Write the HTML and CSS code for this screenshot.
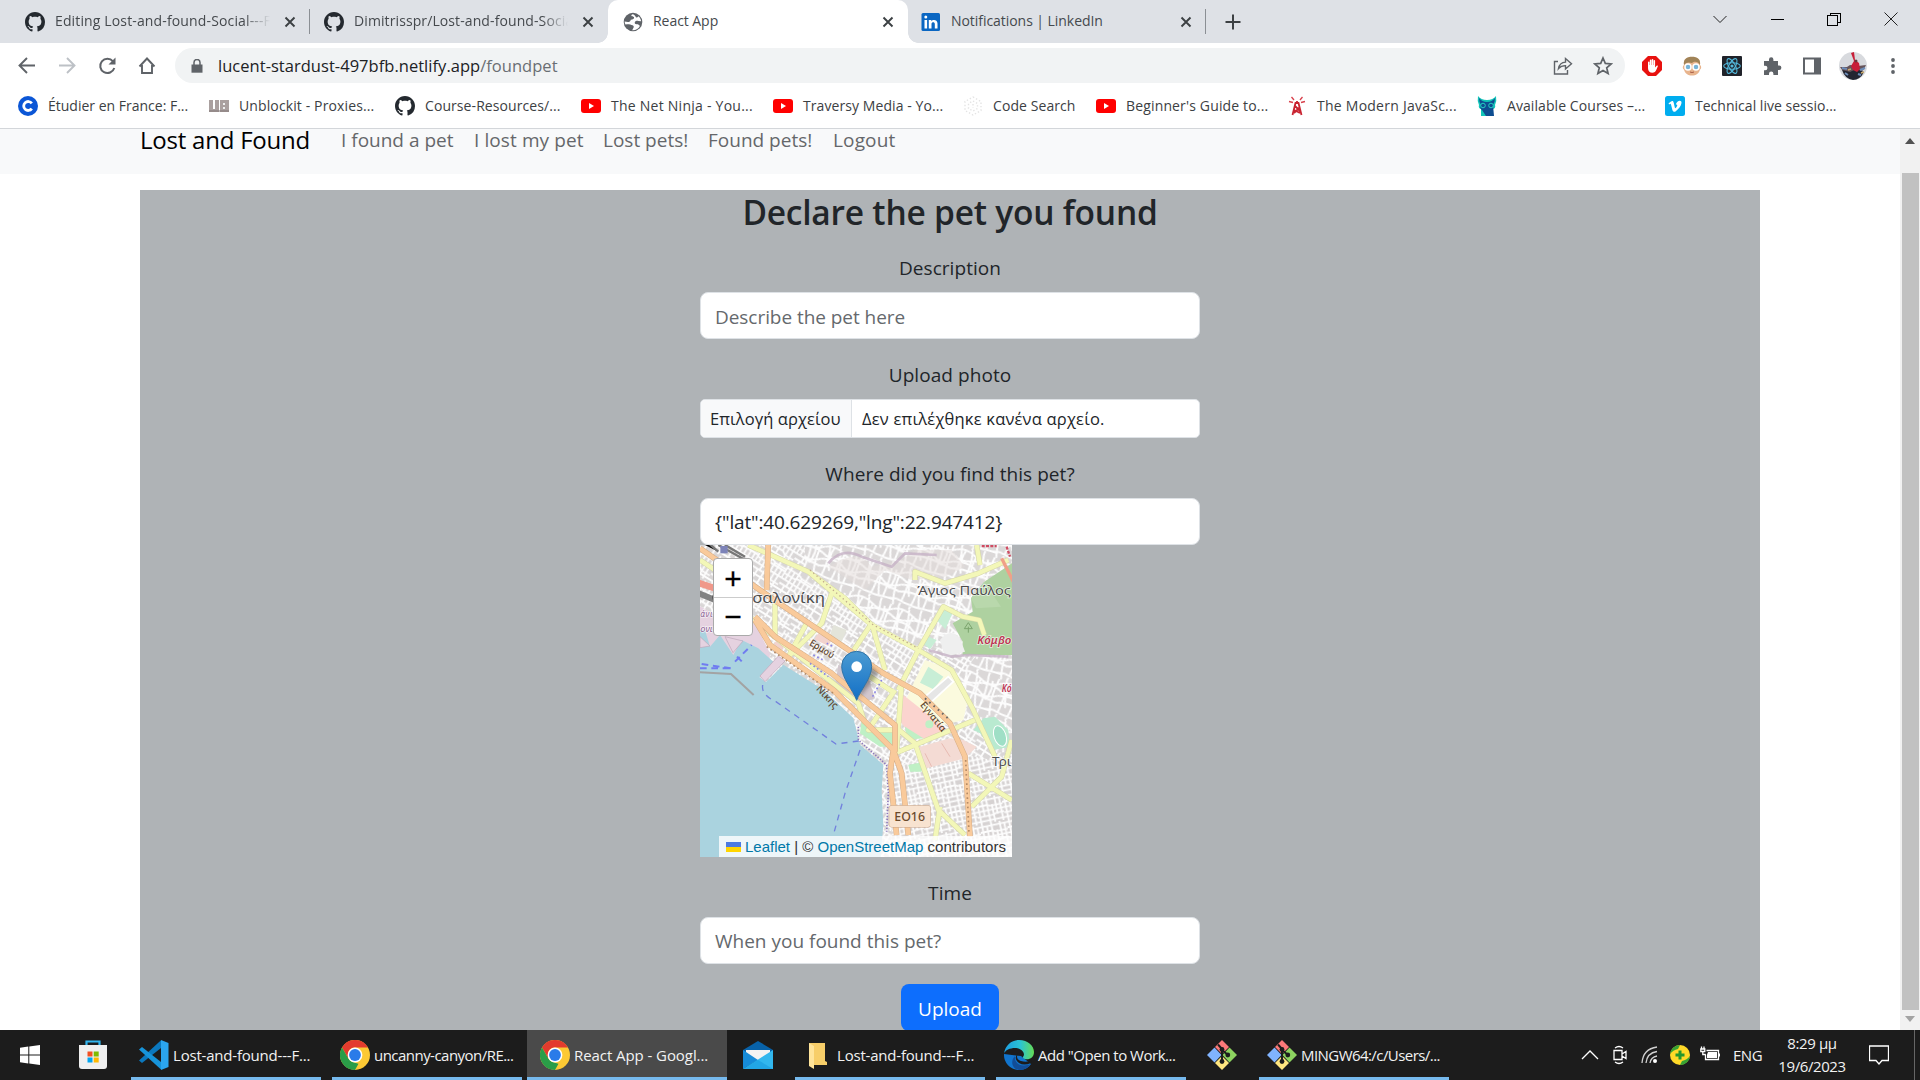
FILE: index.html
```html
<!DOCTYPE html>
<html lang="el">
<head>
<meta charset="utf-8">
<title>React App</title>
<link rel="stylesheet" href="styles.css">
</head>
<body>
<svg class="defs" width="0" height="0" aria-hidden="true">
  <symbol id="github" viewBox="0 0 16 16"><path fill="#24292f" d="M8 0C3.58 0 0 3.58 0 8c0 3.54 2.29 6.53 5.47 7.59.4.07.55-.17.55-.38 0-.19-.01-.82-.01-1.49-2.01.37-2.53-.49-2.69-.94-.09-.23-.48-.94-.82-1.13-.28-.15-.68-.52-.01-.53.63-.01 1.08.58 1.23.82.72 1.21 1.87.87 2.33.66.07-.52.28-.87.51-1.07-1.78-.2-3.64-.89-3.64-3.95 0-.87.31-1.59.82-2.15-.08-.2-.36-1.02.08-2.12 0 0 .67-.21 2.2.82.64-.18 1.32-.27 2-.27s1.36.09 2 .27c1.53-1.04 2.2-.82 2.2-.82.44 1.1.16 1.92.08 2.12.51.56.82 1.27.82 2.15 0 3.07-1.87 3.75-3.65 3.95.29.25.54.73.54 1.48 0 1.07-.01 1.93-.01 2.2 0 .21.15.46.55.38A8.01 8.01 0 0 0 16 8c0-4.42-3.58-8-8-8z"/></symbol>
  <symbol id="close" viewBox="0 0 12 12"><path d="M1.5 1.5l9 9M10.5 1.5l-9 9" stroke="#3c4043" stroke-width="1.9" fill="none"/></symbol>
  <symbol id="youtube" viewBox="0 0 20 20"><rect y="3" width="20" height="14" rx="3" fill="#f00"/><path d="M8 7v6l5-3z" fill="#fff"/></symbol>
  <symbol id="chrome" viewBox="0 0 30 30"><circle cx="15" cy="15" r="15" fill="#fcc934"/><path d="M2 7.5A15 15 0 0 1 28 7.5H15a7.5 7.5 0 0 0-6.5 3.8v7.4z" fill="#e33b2e"/><path d="M2 7.5l6.5 11.2 3 3 7 2L15 30A15 15 0 0 1 2 7.5z" fill="#2a9d48"/><circle cx="15" cy="15" r="7.4" fill="#fff"/><circle cx="15" cy="15" r="5.900" fill="#2a7be9"/></symbol>
  <symbol id="git" viewBox="0 0 30 30"><path d="M15 0l7 7-7 7-7-7z" fill="#fb7979"/><path d="M7.500 7.500l7 7.500-7 7.500L0 15z" fill="#80b3ff"/><path d="M22.500 7.500L30 15l-7.500 7.500-7-7.500z" fill="#8dd35f"/><path d="M15 16l7 7-7 7-7-7z" fill="#ffe680"/><path d="M11 4.500l4 4.500v13M15 10l6 5" stroke="#1c1c1c" stroke-width="2" fill="none"/><circle cx="15" cy="9.500" r="2.400" fill="#1c1c1c"/><circle cx="15" cy="21.500" r="2.400" fill="#1c1c1c"/><circle cx="20.800" cy="15" r="2.400" fill="#1c1c1c"/></symbol>
</svg>

<header class="tabstrip">
  <div class="tab tab-first"><svg class="fav"><use href="#github"/></svg><span class="tab-title fade t-edit">Editing Lost-and-found-Social---F</span><svg class="x"><use href="#close"/></svg></div>
  <div class="tab tab-second"><svg class="fav"><use href="#github"/></svg><span class="tab-title fade t-repo">Dimitrisspr/Lost-and-found-Social</span><svg class="x"><use href="#close"/></svg></div>
  <div class="tab tab-active"><svg class="fav globe" viewBox="0 0 20 20"><circle cx="10" cy="10" r="9.300" fill="#5f6368"/><path d="M9.500 2.200C7 3.500 9 4.600 11 5c.5 1.800-1.200 2.400-3.200 2.700C7.500 9.300 6.500 10 4.800 10l-3.200-.6c.1 1.300.4 2.300.9 3.200 2-.2 4.500-.7 6 .4 1.600.3 2.600 1 2.200 2.300l-1.500 2.900c3.800.2 6.400-1.700 7.700-4.300-.7-1.200-1.700-1.700-3-1.700-1.700.1-2.400-.8-2.100-2 .8-1.300 2.300-1.600 3.600-1.100l2.700.2c-.3-2.200-1.200-3.800-2.600-5-.5 1-1.400 1.400-2.500.9-.7-1.500-2-3-3.500-3z" fill="#fff"/></svg><span class="tab-title t-react">React App</span><svg class="x"><use href="#close"/></svg></div>
  <div class="tab tab-last"><svg class="fav" viewBox="0 0 20 20"><rect x=".5" y="1" width="18.500" height="18" rx="1.500" fill="#0a66c2"/><path d="M3.500 8h2.600v8.500H3.500zM4.800 3.600a1.500 1.500 0 1 1 0 3 1.500 1.500 0 0 1 0-3zM7.800 8h2.500v1.200c1-1.900 6.200-2.200 6.200 2.300v5h-2.700v-4.400c0-2.500-3.300-2.400-3.300 0v4.400H7.800z" fill="#fff"/></svg><span class="tab-title t-link">Notifications | LinkedIn</span><svg class="x"><use href="#close"/></svg></div>
  <svg class="newtab" viewBox="0 0 16 16"><path d="M8 .5v15M.5 8h15" stroke="#3c4043" stroke-width="2"/></svg>
  <div class="winctl">
    <svg viewBox="0 0 14 14"><path d="M.5 4l6.500 6.500L13.500 4" /></svg>
    <svg viewBox="0 0 14 14"><path class="crisp" d="M.5 7.500h13" /></svg>
    <svg viewBox="0 0 14 14"><path class="crisp" d="M.5 3.500h10v10h-10zM3.500 3V1.500h10v9H11" /></svg>
    <svg viewBox="0 0 14 14"><path d="M.5.5l13 13M13.500.5l-13 13" /></svg>
  </div>
</header>

<div class="toolbar">
  <div class="navbtns">
    <svg viewBox="0 0 20 20"><path d="M18 9.500H3M10 2L2.500 9.500 10 17" stroke="#5f6368" stroke-width="1.900" fill="none"/></svg>
    <svg viewBox="0 0 20 20"><path d="M2 9.500h15M10 2l7.500 7.500L10 17" stroke="#bdc1c6" stroke-width="1.900" fill="none"/></svg>
    <svg viewBox="0 0 20 20"><path d="M16 5.300A7.200 7.200 0 1 0 17.300 12" stroke="#5f6368" stroke-width="2" fill="none"/><path d="M18.500 1.500v7h-7z" fill="#5f6368"/></svg>
    <svg viewBox="0 0 20 20"><path d="M2.500 10.500L10 2.500l7.500 8M5 9v8h10V9" stroke="#5f6368" stroke-width="1.900" fill="none"/></svg>
  </div>
  <div class="omnibox">
    <svg class="lock" viewBox="0 0 12 14"><path d="M.5 5.500h11v8.200H.5z" fill="#5f6368"/><path d="M3 6V3.500a3 3 0 0 1 6 0V6" fill="none" stroke="#5f6368" stroke-width="1.500"/></svg>
    <span class="url">lucent-stardust-497bfb.netlify.app<i>/foundpet</i></span>
    <svg class="oi" viewBox="0 0 20 20"><path d="M5 5.500H1.500v12.500h13V14M5.500 12.500c.8-4.500 3-6.200 7-6.400V2.500l6 5.300-6 5.200V9.600c-3 0-5 .5-7 2.900z" stroke="#5f6368" stroke-width="1.400" fill="none"/></svg>
    <svg class="oi" viewBox="0 0 20 20"><path d="M10 2l2.300 5.400 5.900.5-4.500 3.900 1.400 5.700L10 14.400l-5.100 3.100 1.400-5.700L1.800 7.900l5.900-.5z" stroke="#5f6368" stroke-width="1.700" fill="none"/></svg>
  </div>
  <div class="ext">
    <svg viewBox="0 0 20 20"><path d="M6 0h8l6 6v8l-6 6H6l-6-6V6z" fill="#e8110f"/><path d="M6 12V6.300c0-1 1.500-1 1.500 0V9h.3V4.400c0-1.100 1.600-1.100 1.600 0V9h.3V3.800c0-1.100 1.600-1.100 1.600 0V9h.3V4.800c0-1 1.500-1 1.500 0v6.700l1.500-1.700c.8-.7 1.600 0 1.100.9-1.400 3-2.200 6-5.200 6-3 0-4.500-1.600-4.500-4.700z" fill="#fff"/></svg>
    <svg viewBox="0 0 20 20"><path d="M2 9C1 3 5 1 10 1s9 2 8 8c1.600 1 1.500 4 0 4.500-1 4-4 6-8 6s-7-2-8-6C.5 13 .4 10 2 9z" fill="#e8b48d"/><path d="M2 9C1 3 5 .7 10 .7S19 3 18 9c-2-4-6-4-8-2-3-1-6-1-8 2z" fill="#a08357"/><circle cx="6" cy="11" r="3" fill="#78b4d8" stroke="#fff" stroke-width="1.500"/><circle cx="14" cy="11" r="3" fill="#78b4d8" stroke="#fff" stroke-width="1.500"/><path d="M8 16q2 1 4 0" stroke="#a75b45" fill="none"/></svg>
    <svg viewBox="0 0 20 20"><rect width="20" height="20" rx="1" fill="#20232a"/><g fill="none" stroke="#53b9dc" stroke-width="1.100"><ellipse cx="10" cy="10" rx="8.300" ry="3.200"/><ellipse cx="10" cy="10" rx="8.300" ry="3.200" transform="rotate(60 10 10)"/><ellipse cx="10" cy="10" rx="8.300" ry="3.200" transform="rotate(120 10 10)"/></g><circle cx="10" cy="10" r="1.600" fill="#53b9dc"/></svg>
    <svg viewBox="0 0 20 20"><path d="M2 5h5V3.500a2.200 2.200 0 0 1 4.400 0V5H16v4.600h1.200a2.200 2.200 0 0 1 0 4.400H16v5h-4.600v-1.300a2.200 2.200 0 0 0-4.400 0V19H2v-4.700h1.200a2.200 2.200 0 0 0 0-4.500H2z" fill="#5f6368"/></svg>
    <svg viewBox="0 0 20 20"><path d="M2 2.500h16v15H2z" fill="none" stroke="#5f6368" stroke-width="2"/><path d="M12 2h6v16h-6z" fill="#5f6368"/></svg>
    <svg class="avatar" viewBox="0 0 28 28"><circle cx="14" cy="14" r="14" fill="#d8dade"/><path d="M1 15h7l3-2 8 1 8-1a14 14 0 0 1-26 2z" fill="#66545a"/><path d="M3 18l8 2 6-3 8 3q-4 8-11 8Q6 27 3 18z" fill="#232531"/><path d="M12 1l3-1 1 8 4 3 1 6-3 3-4-2-2-4 3-5z" fill="#c81e38"/><path d="M3 16l5 1M21 18l5-2M6 21l3 2M19 22l3 1" stroke="#6c8cb8" stroke-width="2"/><path d="M9 18l3-1M22 21l3-1" stroke="#c9ab70" stroke-width="1.500"/><circle cx="17" cy="9" r="1.500" fill="#69383a"/></svg>
    <svg viewBox="0 0 20 20"><g fill="#5f6368"><circle cx="9" cy="4" r="1.900"/><circle cx="9" cy="10" r="1.900"/><circle cx="9" cy="16" r="1.900"/></g></svg>
  </div>
</div>

<nav class="bookmarks">
  <a class="bm b1"><svg viewBox="0 0 20 20"><circle cx="10" cy="10" r="10" fill="#0b56d6"/><path d="M13.800 7.300a4.500 4.500 0 1 0 0 5.400" fill="none" stroke="#fff" stroke-width="2.800"/></svg><span>Étudier en France: F...</span></a>
  <a class="bm b2"><svg viewBox="0 0 20 20"><path d="M0 4h4v9h2V4h4v12H0zM11 4h9v12h-9z" fill="#aaa09f"/><path d="M14 7h2v2h-2zM14 11h2v2h-2z" fill="#eee"/><path d="M0 15h20" stroke="#817777"/></svg><span>Unblockit - Proxies...</span></a>
  <a class="bm b3"><svg><use href="#github"/></svg><span>Course-Resources/...</span></a>
  <a class="bm b4"><svg><use href="#youtube"/></svg><span>The Net Ninja - You...</span></a>
  <a class="bm b5"><svg><use href="#youtube"/></svg><span>Traversy Media - Yo...</span></a>
  <a class="bm b6"><svg viewBox="0 0 20 20"><path d="M10 1l8 4.500v9L10 19l-8-4.500v-9zM10 5l4.500 2.500v5L10 15l-4.500-2.500v-5zM10 8v4" fill="none" stroke="#e4e4e4" stroke-width="1.400" stroke-dasharray="1.400 2"/></svg><span>Code Search</span></a>
  <a class="bm b7"><svg><use href="#youtube"/></svg><span>Beginner's Guide to...</span></a>
  <a class="bm b8"><svg viewBox="0 0 20 20"><path d="M5.500 19l3-12h3l3 12M7 14l6 3M8 10l5 5M7 17l5-5M10 7V5" fill="none" stroke="#c92330" stroke-width="1.800"/><path d="M7 4L4.500 1M13 4l2.500-3M6 6.500L2 5.500M14 6.500l4-1" stroke="#d8404b" stroke-width="1.300"/></svg><span>The Modern JavaSc...</span></a>
  <a class="bm b9"><svg viewBox="0 0 20 20"><path d="M1 0q3 4 9 4t9-4q1 5-1 9 1 3-2 4v7H4v-7q-3-1-2-4Q0 5 1 0z" fill="#12c5b8"/><path d="M2 2q3 4 8 4t8-4q0 4-2 7l1 11H9l-4-6Q2 12 4 9 2 6 2 2z" fill="#0e4d91"/><circle cx="6" cy="9.500" r="2.300" fill="#0e4d91" stroke="#23d0c2"/><circle cx="14" cy="9.500" r="2.300" fill="#0e4d91" stroke="#23d0c2"/></svg><span>Available Courses –...</span></a>
  <a class="bm b10"><svg viewBox="0 0 20 20"><rect width="20" height="20" rx="2.500" fill="#00adef"/><path d="M3.500 7.500c3-3 4.700-3.600 5.300-.5l1 4.500c.5 1.300 1 .8 2-1 .8-1.600.6-2.400-1-2 1-4.200 6-5.200 5.700-1.500-.3 3-3 6-6 8.500-2.500 1.200-3-1-3.500-3L6 8.500c-.5-1.200-1-.7-1.800 0z" fill="#fff"/></svg><span>Technical live sessio...</span></a>
</nav>

<div class="viewport">
  <main class="page">
    <nav class="sitenav"><div class="container">
      <a class="brand">Lost and Found</a>
      <a class="link l1">I found a pet</a><a class="link l2">I lost my pet</a><a class="link l3">Lost pets!</a><a class="link l4">Found pets!</a><a class="link l5">Logout</a>
    </div></nav>
    <section class="panel">
      <h1>Declare the pet you found</h1>
      <form class="form">
        <label>Description</label>
        <div class="field placeholder f1">Describe the pet here</div>
        <label>Upload photo</label>
        <div class="file"><span class="choose">Επιλογή αρχείου</span><span class="nofile">Δεν επιλέχθηκε κανένα αρχείο.</span></div>
        <label>Where did you find this pet?</label>
        <div class="field loc">{"lat":40.629269,"lng":22.947412}</div>
        <div class="map">
          <svg viewBox="15 15 936 936">
            <defs>
              <pattern id="st1" width="94" height="86" patternUnits="userSpaceOnUse" patternTransform="rotate(32)"><rect width="94" height="86" fill="#d9d6d6"/><path d="M0 10h40l12 6h42M0 28h32l12-5h50M0 44h94M0 60h54l10 7h30M0 77h94M10 0v44M24 10v50M38 0v86M52 16v44M66 0v86M80 22v64M18 60v26M92 0v44" stroke="#fdfdfd" stroke-width="5.500" fill="none"/></pattern>
              <pattern id="st2" width="82" height="78" patternUnits="userSpaceOnUse" patternTransform="rotate(-12)"><rect width="82" height="78" fill="#d6d2d2"/><path d="M0 8h82M0 24h36l8 4h38M0 40h82M0 56h50l8-4h24M0 70h82M8 0v78M22 8v48M36 0v78M50 24v54M62 0v56M75 8v70" stroke="#fdfdfd" stroke-width="5.500" fill="none"/></pattern>
              <pattern id="st3" width="126" height="114" patternUnits="userSpaceOnUse" patternTransform="rotate(18)"><rect width="126" height="114" fill="#dbd8d8"/><path d="M0 12q30-14 60 4t66-4M0 32q20 14 56 0t70 0M0 50q50-14 70 4t56-4M0 72q40-16 126 0M0 94q60 16 126 0M12 0q14 40 0 114M28 8q-12 30 5 70M46 0q14 44-2 114M64 14q-12 34 6 84M82 0q10 50 0 114M98 12q10 34-6 60M116 0q-12 60 4 114" stroke="#fdfdfd" stroke-width="6" fill="none"/></pattern>
              <linearGradient id="pin" x2="0" y2="1"><stop stop-color="#4b9bd2"/><stop offset="1" stop-color="#126fc6"/></linearGradient>
              <filter id="soft"><feGaussianBlur stdDeviation="1.300"/></filter>
              <filter id="shade"><feGaussianBlur stdDeviation="7"/></filter>
            </defs>
            <g filter="url(#soft)">
            <rect width="966" height="966" fill="url(#st1)"/>
            <path d="M330 0h650v330L670 320 520 240 330 90z" fill="url(#st3)"/>
            <path d="M860 330h120v300l-80 10-80-100-40-120z" fill="url(#st3)"/>
            <path d="M590 680l200-40 200 40v300H590z" fill="url(#st2)"/>
            <path d="M400 80q90-60 130 0 50-10 90-20l40-30h110l40 50-60 30-100 10-80-30-60 60z" fill="#e3dcd9" opacity=".5"/>
            <path d="M951 70l-83 55-40 50 5 40-60 35 30 55v40h148z" fill="#aed1a0"/>
            <path d="M868 125l50 75-75 5-15-30z" fill="#b9d8ac"/>
            <path d="M735 300q30-40 60-5l15 40-60 15z" fill="#efefef"/>
            <path d="M660 420l30-60 80 30 50 80-15 70-80 20-95-75z" fill="#fbfade"/>
            <path d="M700 380l45 30-30 38-40-20zM745 210l28 8-22 50-28-30zM700 290l25 10-20 28-22-18z" fill="#c8eed6"/>
            <path d="M690 470l70-60 15 15-65 60z" fill="#e6e6e6" stroke="#fff" stroke-width="5"/>
            <path d="M625 465l120 95 25 20-65 20-60-15-35-50z" fill="#fbd4cf"/>
            <path d="M630 560l55 35-50 5z" fill="#bff0c5"/><circle cx="703" cy="553" r="12" fill="#bff0c5"/>
            <path d="M660 625l105-30 40 5 40 20-35 35-115 30z" fill="#f4dbd4"/><path d="M740 610l25 40M690 640l20 40" stroke="#e8bbb2" stroke-width="3"/>
            <path d="M835 570l30-35 35-5 40 40 5 50-50 10-40-50z" fill="#b9ead0"/><ellipse cx="915" cy="588" rx="18" ry="32" fill="#9fdfc6" stroke="#fff" stroke-width="3" transform="rotate(-18 915 588)"/>
            <path d="M500 540l35 35h60v45h-40l-60-40zM640 675l40-8v28h-35z" fill="#bff0c5"/>
            <path d="M415 255l40 15-15 35-35-20z" fill="#e3e4da"/><path d="M245 300l25 12-15 30-25-18zM370 280l40 20-10 18-42-20z" fill="#f2d3cd"/><path d="M430 375l90 40 20 60-60 20-60-60z" fill="#d2c7ce"/>
            <path d="M0 190l70 40 110 20 45 90-5 70-140-30L0 330z" fill="#e5d2e0"/>
            <path d="M0 270l30 0 15 50 30-35 40 60 25-45 50 25 45 40-42 46 20 15 52-52 120 75 90 85 20 80 70 60-5 80 5 100-10 120H0z" fill="#aad3df"/>
            <path d="M15 290l30 28-30 5zM90 290l24 48 30-35zM195 408l55-60 20 15-60 62z" fill="#e5d2e0" stroke="#bda6b9" stroke-width="2"/>
            <path d="M15 397l93 5 68 63" stroke="#a3a3a3" stroke-width="6" fill="none"/>
            <path d="M15 385h95M20 372l95 14M120 365l50-50M126 350l15 15" stroke="#6f7bf0" stroke-width="6" stroke-dasharray="20 14" fill="none"/>
            <path d="M203 435q-5 30 40 50l180 127 75-10M495 630l-45 130-35 125" stroke="#7281dd" stroke-width="4" stroke-dasharray="18 16" fill="none"/>
            <path d="M490 560v40l85 75 5 80-5 120" stroke="#8d79bd" stroke-width="5" stroke-dasharray="4 5" fill="none"/>
            <g id="minor" fill="none" stroke-linejoin="round"><path stroke="#d5d7a8" stroke-width="16" d="M160 15l180 80 190 160 140 75 100 60 60 110 70 150M15 60l60 40M340 95l110 80 80 80M530 250L470 340M530 250l40 140M410 160l-30 90-100 100M340 240l-60 110M240 190v100M660 120V95l90 35 100-30 90-40M845 15l10 60M670 330l75-130 58 30 50 10 15 45M610 450l60-120M170 235l320 255 20 60M510 400l90 60M600 450l-80 120h80M600 640l240-100M620 430l-15 200M600 560l60 50 70 200 80 75M735 800l-15 100M820 700l130 80M830 800l90-90 30-110"/><path stroke="#f3f7b8" stroke-width="13" d="M160 15l180 80 190 160 140 75 100 60 60 110 70 150M15 60l60 40M340 95l110 80 80 80M530 250L470 340M530 250l40 140M410 160l-30 90-100 100M340 240l-60 110M240 190v100M660 120V95l90 35 100-30 90-40M845 15l10 60M670 330l75-130 58 30 50 10 15 45M610 450l60-120M170 235l320 255 20 60M510 400l90 60M600 450l-80 120h80M600 640l240-100M620 430l-15 200M600 560l60 50 70 200 80 75M735 800l-15 100M820 700l130 80M830 800l90-90 30-110"/></g>
            <g fill="none" stroke-linejoin="round"><path stroke="#d6ad86" stroke-width="17" d="M220 0l-5 150M15 25l230 160 320 215 110 60 90 90 45 100 15 240M180 230l60 60 170 110 190 155v80M180 240l45 75 190 135 180 180 25 70 20 185M595 630l-10 70 20 185"/><path stroke="#f9ca9b" stroke-width="14" d="M220 0l-5 150M15 25l230 160 320 215 110 60 90 90 45 100 15 240M180 230l60 60 170 110 190 155v80M180 240l45 75 190 135 180 180 25 70 20 185M595 630l-10 70 20 185"/></g>
            <path d="M345 90l190 165 135 70" stroke="#c0a98c" stroke-width="4" stroke-dasharray="4 9" fill="none"/>
            <path d="M215 320l200 140M812 660l10 220" stroke="#b58b66" stroke-width="5" stroke-dasharray="5 9" fill="none"/>
            <path d="M0 0h30l40 35M70 15l90 50M90 15l60 35" stroke="#777" stroke-width="7"/><path d="M76 18h22v22H76z" fill="#7d83b8"/>
            <path d="M0 125l60 20" stroke="#f0988a" stroke-width="20"/><path d="M0 155l60 25" stroke="#828282" stroke-width="18"/>
            <path d="M690 475l75 65" fill="none" stroke="#666" stroke-width="6" stroke-dasharray="5 12"/>
            <path d="M400 70q40-50 100-20l90 30 40-40 95 5M700 330l70 20 50-5 120 5" stroke="#c6b2c5" stroke-width="8" fill="none" opacity=".8"/>
            <path d="M345 370l55 40M395 310l20 10M560 420l-30 55M355 345l30 15" stroke="#8883e6" stroke-width="5" stroke-dasharray="5 8"/>
            <path d="M920 55l35 70" stroke="#f0a088" stroke-width="10"/>
            <path d="M860 18h45M935 20l10 30" stroke="#cf4c62" stroke-width="7" stroke-dasharray="9 4"/>
            <path d="M820 248l-12 18h24zM820 260v18" stroke="#7ba46d" stroke-width="3" fill="none"/>
            <path d="M62 158q-16 14 0 30" stroke="#4d4d4d" stroke-width="5" fill="none"/>
            </g>
            <g class="maptext">
              <text x="172" y="190" font-size="45" textLength="218" lengthAdjust="spacingAndGlyphs">σαλονίκη</text>
              <text x="667" y="165" font-size="38" textLength="281" lengthAdjust="spacingAndGlyphs">Άγιος Παύλος</text>
              <text x="891" y="678" font-size="36" textLength="58" lengthAdjust="spacingAndGlyphs">Τρι</text>
              <text class="it" x="847" y="313" font-size="31" textLength="102" lengthAdjust="spacingAndGlyphs">Κόμβο</text>
              <text class="it" x="920" y="457" font-size="30" textLength="30" lengthAdjust="spacingAndGlyphs">Κό</text>
              <text class="pl" x="16" y="230" font-size="25" textLength="37">άνι</text><text class="pl" x="16" y="276" font-size="25" textLength="37" lengthAdjust="spacingAndGlyphs">ονι</text>
              <text class="rd" x="0" y="0" font-size="29" textLength="82" lengthAdjust="spacingAndGlyphs" transform="translate(341 314) rotate(31)">Ερμού</text>
              <text class="rd" x="0" y="0" font-size="29" textLength="82" lengthAdjust="spacingAndGlyphs" transform="translate(362 448) rotate(47)">Νίκης</text>
              <text class="rd" x="0" y="0" font-size="29" textLength="106" lengthAdjust="spacingAndGlyphs" transform="translate(674 495) rotate(51)">Εγνατία</text>
              <rect x="583" y="797" width="123" height="64" rx="8" fill="#f8e3d0" stroke="#c9a384" stroke-width="4"/>
              <text class="shield" x="598" y="844" font-size="36" textLength="92" lengthAdjust="spacingAndGlyphs">ΕΟ16</text>
            </g>
            <path d="M488 478l62-75q-15-30-40-20z" fill="#222" opacity=".4" filter="url(#shade)"/>
            <path d="M485 481C475 452 440 415 440 379a45 45 0 0 1 90 0c0 36-35 73-45 102z" fill="url(#pin)" stroke="#2e73a8" stroke-width="3"/><circle cx="485" cy="380" r="16" fill="#fff"/>
          </svg>
          <div class="zoomctl"><b>+</b><b>−</b></div>
          <div class="attr"><svg viewBox="0 0 12 8"><path fill="#4c7be1" d="M0 0h12v4H0z"/><path fill="#ffd500" d="M0 4h12v4H0z"/></svg><em>Leaflet</em> | © <em>OpenStreetMap</em> contributors</div>
        </div>
        <label>Time</label>
        <div class="field placeholder f3">When you found this pet?</div>
        <div class="upload">Upload</div>
      </form>
    </section>
  </main>
  <aside class="scrollbar"><svg viewBox="0 0 10 6"><path d="M0 6l5-6 5 6z" fill="#505050"/></svg><div class="thumb"></div><svg viewBox="0 0 10 6"><path d="M0 0l5 6 5-6z" fill="#a3a3a3"/></svg></aside>
</div>

<footer class="taskbar">
  <div class="cell start"><svg viewBox="0 0 20 20"><path d="M0 2.800l8.300-1.200v8H0zM9.300 1.400L20 0v9.600H9.300zM0 10.500h8.300v8L0 17.300zM9.300 10.500H20V20L9.300 18.600z" fill="#fff"/></svg></div>
  <div class="cell store"><svg viewBox="0 0 30 30"><path d="M8.500 6V1.500h13V6" fill="none" stroke="#32b5ee" stroke-width="2.200"/><path d="M1 5h28v21q0 3-3 3H4q-3 0-3-3z" fill="#efefef"/><path d="M9.500 11.500h5v5h-5z" fill="#f25022"/><path d="M15.700 11.500h5v5h-5z" fill="#7fba00"/><path d="M9.500 17.500h5v5h-5z" fill="#00a4ef"/><path d="M15.700 17.500h5v5h-5z" fill="#ffb900"/></svg></div>
  <div class="task open k1"><svg viewBox="0 0 30 30"><path d="M22 .3L0 20.500 3 23 22 8z" fill="#0b78be"/><path d="M3 7L0 9.500 22 29.500V22z" fill="#1794da"/><path d="M22 0l7.500 3v24L22 30z" fill="#2ba5ee"/></svg><span>Lost-and-found---F...</span></div>
  <div class="task open k2"><svg><use href="#chrome"/></svg><span>uncanny-canyon/RE...</span></div>
  <div class="task open active k3"><svg><use href="#chrome"/></svg><span>React App - Googl...</span></div>
  <div class="cell mail"><svg viewBox="0 0 30 30"><path d="M0 10L15 1l15 9v5H0z" fill="#0862a9"/><path d="M3 10h24v10H3z" fill="#f3f3f3"/><path d="M0 10l15 10L0 29z" fill="#168bd8"/><path d="M30 10v19H0z" fill="#32b7ee"/><path d="M15 20l15 9H0z" fill="#189be0" opacity=".6"/></svg></div>
  <div class="task open k4"><svg viewBox="0 0 30 30"><path d="M6 3h16v18l2 1v3H10z" fill="#f7ce69"/><path d="M6 3l5 3v23l-5-3z" fill="#ffe49a"/></svg><span>Lost-and-found---F...</span></div>
  <div class="task open k5"><svg viewBox="0 0 30 30"><defs><linearGradient id="edge"><stop stop-color="#1b9de2"/><stop offset=".55" stop-color="#2bc3d2"/><stop offset="1" stop-color="#65dc55"/></linearGradient></defs><path d="M0 14a15 15 0 0 0 15 16c6 0 10-3 12-6l-10-8z" fill="#1174cd"/><path d="M0 14C1 5 8 0 15 0c9 0 15 6 15 12 0 6-5 8-9 7-3-1-2-2-1-4 0-4-4-7-9-7-5 0-10 2-11 6z" fill="url(#edge)"/><path d="M11 16c-1 7 5 12 16 8-3 4-7 6-12 6C8 29 6 21 11 16z" fill="#124d97"/><path d="M14 13q-3 6 3 8 6 2 11-1l-1 3q-7 3-12 0-6-4-1-10z" fill="#1c1c1c"/></svg><span>Add "Open to Work...</span></div>
  <div class="cell gitcell"><svg><use href="#git"/></svg></div>
  <div class="task open k6"><svg><use href="#git"/></svg><span>MINGW64:/c/Users/...</span></div>
  <div class="tray">
    <svg viewBox="0 0 20 20"><path d="M2 14l8-8 8 8"/></svg>
    <svg viewBox="0 0 20 20"><path d="M4 5.500h8v9H4zM12 9l4-2.500v7L12 11M5 3q4-3 8 0M5 17q4 3 8 0"/></svg>
    <svg viewBox="0 0 20 20"><g opacity=".8"><path d="M2 18Q3 4 17 2M6 18Q7 8 17 6.500M10 18q1-6 7-7"/></g><circle cx="15" cy="16" r="2" fill="#fff" stroke="none"/></svg>
    <svg viewBox="0 0 20 20"><circle cx="10" cy="10" r="10" fill="#ffd928" stroke="none"/><path d="M0 9A10 10 0 0 1 10 0l-2 4Q3 5 0 9zM20 11a10 10 0 0 1-10 9l2-4q5-1 8-5z" fill="#37a333" stroke="none"/><path d="M10 5.500v9M5.500 10h9" stroke="#25962d" stroke-width="3"/></svg>
    <svg viewBox="0 0 20 20"><path d="M6.500 5.500h12v9h-13v-5M19.500 8.500v3" /><path d="M8 7h9v6H7V9.500z" fill="#fff" stroke="none"/><path d="M.8 4h4v2.500h-4zM1.500 1.500V4M4 1.500V4M2.800 7v2.500h3"/></svg>
    <span class="lang">ENG</span>
    <div class="clock"><span>8:29 μμ</span><span class="date">19/6/2023</span></div>
    <svg class="notif" viewBox="0 0 20 20"><path d="M.5 1h19v14.500H13L10 19l-3-3.500H.5z"/></svg>
    <i class="peek"></i>
  </div>
</footer>
</body>
</html>
```
FILE: styles.css
```css
* { box-sizing: border-box; }
body { margin: 0; width: 1920px; height: 1080px; overflow: hidden; display: flex; flex-direction: column; background: #fff; font-family: "Open Sans", "Noto Sans", sans-serif; color: #212529; }
svg { display: block; flex: none; }
.defs { position: absolute; }
span, a { white-space: nowrap; }

.tabstrip { height: 43px; flex: none; background: #dee1e6; display: flex; align-items: center; font-size: 14px; color: #45494d; }
.tab { height: 43px; display: flex; align-items: center; padding-right: 14px; position: relative; }
.tab .fav { width: 20px; height: 20px; margin-right: 10px; }
.tab .x { width: 12px; height: 12px; }
.tab-title { flex: 1; overflow: hidden; letter-spacing: -.05px; line-height: 24px; margin-top: -2px; }
.fade { -webkit-mask-image: linear-gradient(90deg, #000 88%, transparent); mask-image: linear-gradient(90deg, #000 88%, transparent); margin-right: 14px; }
.t-edit { letter-spacing: .14px; }
.t-repo { letter-spacing: .1px; }
.tab-first { width: 310px; padding-left: 25px; }
.tab-second { width: 298px; padding-left: 14px; }
.tab-active { width: 300px; padding-left: 15px; background: #fff; border-radius: 10px 10px 0 0; }
.tab-last { width: 298px; padding-left: 13px; }
.tab-active::before, .tab-active::after { content: ""; position: absolute; bottom: 0; width: 10px; height: 10px; }
.tab-active::before { left: -10px; background: radial-gradient(circle at 0 0, transparent 9.5px, #fff 10px); }
.tab-active::after { right: -10px; background: radial-gradient(circle at 100% 0, transparent 9.5px, #fff 10px); }
.tab-first::after, .tab-last::after { content: ""; position: absolute; right: 0; top: 9px; width: 1px; height: 25px; background: #8b8f94; }
.newtab { width: 16px; height: 16px; margin-left: 19px; }
.winctl { margin-left: auto; display: flex; gap: 43px; padding: 0 22px 6px 0; }
.winctl svg { width: 14px; height: 14px; fill: none; stroke: #222; stroke-width: 1; }
.crisp { shape-rendering: crispEdges; stroke: #000; }

.toolbar { height: 45px; flex: none; display: flex; align-items: center; padding-left: 17px; }
.navbtns { display: flex; gap: 20px; width: 158px; }
.navbtns svg, .ext svg, .oi { width: 20px; height: 20px; }
.omnibox { width: 1450px; height: 35px; border-radius: 18px; background: #f1f3f4; display: flex; align-items: center; padding: 0 12px 0 16px; }
.lock { width: 12px; height: 14px; margin-right: 15px; }
.url { flex: 1; font-size: 16.5px; letter-spacing: .03px; color: #202124; }
.url i { font-style: normal; color: #6a6e73; }
.oi + .oi { margin-left: 20px; }
.ext { display: flex; gap: 20px; align-items: center; margin-left: 17px; }
.ext .avatar { width: 28px; height: 28px; margin: 0 -3px; }

.bookmarks { height: 41px; flex: none; border-bottom: 1px solid #d3d6da; display: flex; align-items: center; padding: 0 0 4px 18px; font-size: 14px; color: #3c4043; }
.bm { display: flex; align-items: center; gap: 10px; line-height: 24px; letter-spacing: .08px; }
.bm svg { width: 20px; height: 20px; }
.b1 { width: 191px; letter-spacing: 0; }
.b2 { width: 186px; letter-spacing: .12px; }
.b3 { width: 186px; }
.b4 { width: 192px; letter-spacing: .25px; }
.b5 { width: 190px; }
.b6 { width: 133px; }
.b7 { width: 191px; letter-spacing: .15px; }
.b8 { width: 190px; letter-spacing: .25px; }
.b9 { width: 188px; }
.b10 { letter-spacing: .02px; }

.viewport { height: 901px; flex: none; display: flex; }
.page { width: 1900px; height: 901px; overflow: hidden; }
.sitenav { height: 45px; background: #f8f9fa; }
.container { width: 1620px; height: 45px; margin: 0 auto; display: flex; align-items: flex-start; }
.brand { color: #000; font-size: 24px; letter-spacing: -.22px; width: 201px; line-height: 22px; }
.link { color: #65676a; font-size: 19px; line-height: 22px; }
.l1 { width: 133px; } .l2 { width: 129px; letter-spacing: .1px; } .l3 { width: 105px; } .l4 { width: 125px; } .l5 { letter-spacing: .15px; }
.panel { width: 1620px; height: 840px; margin: 16px auto 0; background: #afb3b6; }
h1 { margin: 0; height: 52px; padding-top: 1px; font-size: 33.5px; line-height: 42px; font-weight: 600; text-align: center; letter-spacing: -.22px; }
.form { width: 500px; margin: 10px auto 0; display: flex; flex-direction: column; font-size: 19px; }
label { text-align: center; height: 30px; padding-top: 2px; line-height: 28px; margin-bottom: 10px; letter-spacing: .06px; }
.field { height: 47px; border: 1px solid #dee2e6; border-radius: 8px; background: #fff; padding: 0 14px; line-height: 47px; white-space: nowrap; }
.placeholder { color: #65696d; }
.f1 { margin-bottom: 20px; line-height: 48px; letter-spacing: -.05px; }
.loc { letter-spacing: -.15px; }
.file { height: 39px; border: 1px solid #dee2e6; border-radius: 5px; background: #fff; display: flex; overflow: hidden; margin-bottom: 20px; font-size: 16.5px; line-height: 37px; }
.choose { width: 151px; background: #f8f9fa; border-right: 1px solid #dee2e6; padding-left: 9px; letter-spacing: .08px; }
.nofile { padding-left: 10px; letter-spacing: .2px; }
.map { width: 312px; height: 312px; margin-bottom: 20px; position: relative; overflow: hidden; }
.map > svg { width: 312px; height: 312px; }
.maptext { font-family: "Noto Sans", sans-serif; fill: #4d4d4d; stroke: #fff; stroke-width: 4px; stroke-opacity: .7; paint-order: stroke; }
.it { fill: #bd3553; font-style: italic; font-weight: 600; }
.pl { fill: #8b5f91; font-style: italic; }
.rd { fill: #60452c; stroke: none; font-weight: 500; }
.shield { fill: #6b4a2c; font-weight: 500; stroke: none; }
.zoomctl { position: absolute; left: 13px; top: 13px; width: 40px; border: 1px solid #aaa; border-radius: 4px; background: #fff; display: flex; flex-direction: column; }
.zoomctl b { height: 38px; font: 500 30px/39px "Liberation Sans", sans-serif; text-align: center; color: #000; -webkit-text-stroke: .3px #000; }
.zoomctl b + b { border-top: 1px solid #ccc; line-height: 37px; }
.attr { position: absolute; right: 0; bottom: 0; height: 21px; width: 293px; padding-left: 7px; background: rgba(255,255,255,.8); font: 15px/21px "Liberation Sans", Arial, sans-serif; color: #333; white-space: nowrap; }
.attr svg { display: inline-block; width: 15px; height: 10px; margin-right: 4px; }
.attr em { font-style: normal; color: #0078a8; }
.upload { align-self: center; width: 98px; height: 47px; margin-top: 20px; border-radius: 8px; background: #0d6efd; color: #fff; text-align: center; line-height: 50px; }
.scrollbar { width: 20px; background: #f1f1f1; display: flex; flex-direction: column; align-items: center; padding: 9px 0 8px; }
.scrollbar svg { width: 10px; height: 6px; }
.thumb { width: 17px; height: 837px; margin: 29px 0 auto; background: #c1c1c1; }

.taskbar { height: 50px; flex: none; background: #1c1c1c; display: flex; color: #f2f2f2; font-size: 15px; }
.cell { display: flex; align-items: center; justify-content: center; }
.cell svg, .task svg { width: 30px; height: 30px; }
.start { width: 60px; }
.start svg { width: 20px; height: 20px; }
.store { width: 66px; }
.task { width: 190px; height: 50px; display: flex; align-items: center; gap: 4px; padding-left: 8px; border-bottom: 3px solid #76b9ed; letter-spacing: -.2px; }
.task svg { margin-top: 3px; }
.task span { line-height: 26px; margin-top: 2px; }
.k1 { margin-left: 5px; }
.k2 { margin-left: 11px; letter-spacing: -.53px; }
.active { width: 200px; margin-left: 5px; background: #4a4a4a; padding-left: 13px; letter-spacing: -.07px; }
.mail { width: 62px; }
.k4 { margin-left: 6px; }
.k5 { margin-left: 11px; letter-spacing: -.48px; }
.gitcell { width: 71px; }
.k6 { margin-left: 2px; letter-spacing: -.56px; }
.tray { flex: 1; display: flex; align-items: center; padding-left: 131px; }
.tray svg { width: 20px; height: 20px; margin-right: 10px; fill: none; stroke: #fff; stroke-width: 1.3; }
.lang { width: 46px; letter-spacing: -.5px; margin-left: 3px; }
.clock { width: 66px; display: flex; flex-direction: column; align-items: center; line-height: 23px; letter-spacing: -.4px; }
.tray .notif { margin: 0 25px 0 24px; }
.peek { width: 1px; height: 50px; background: #666; }
```
